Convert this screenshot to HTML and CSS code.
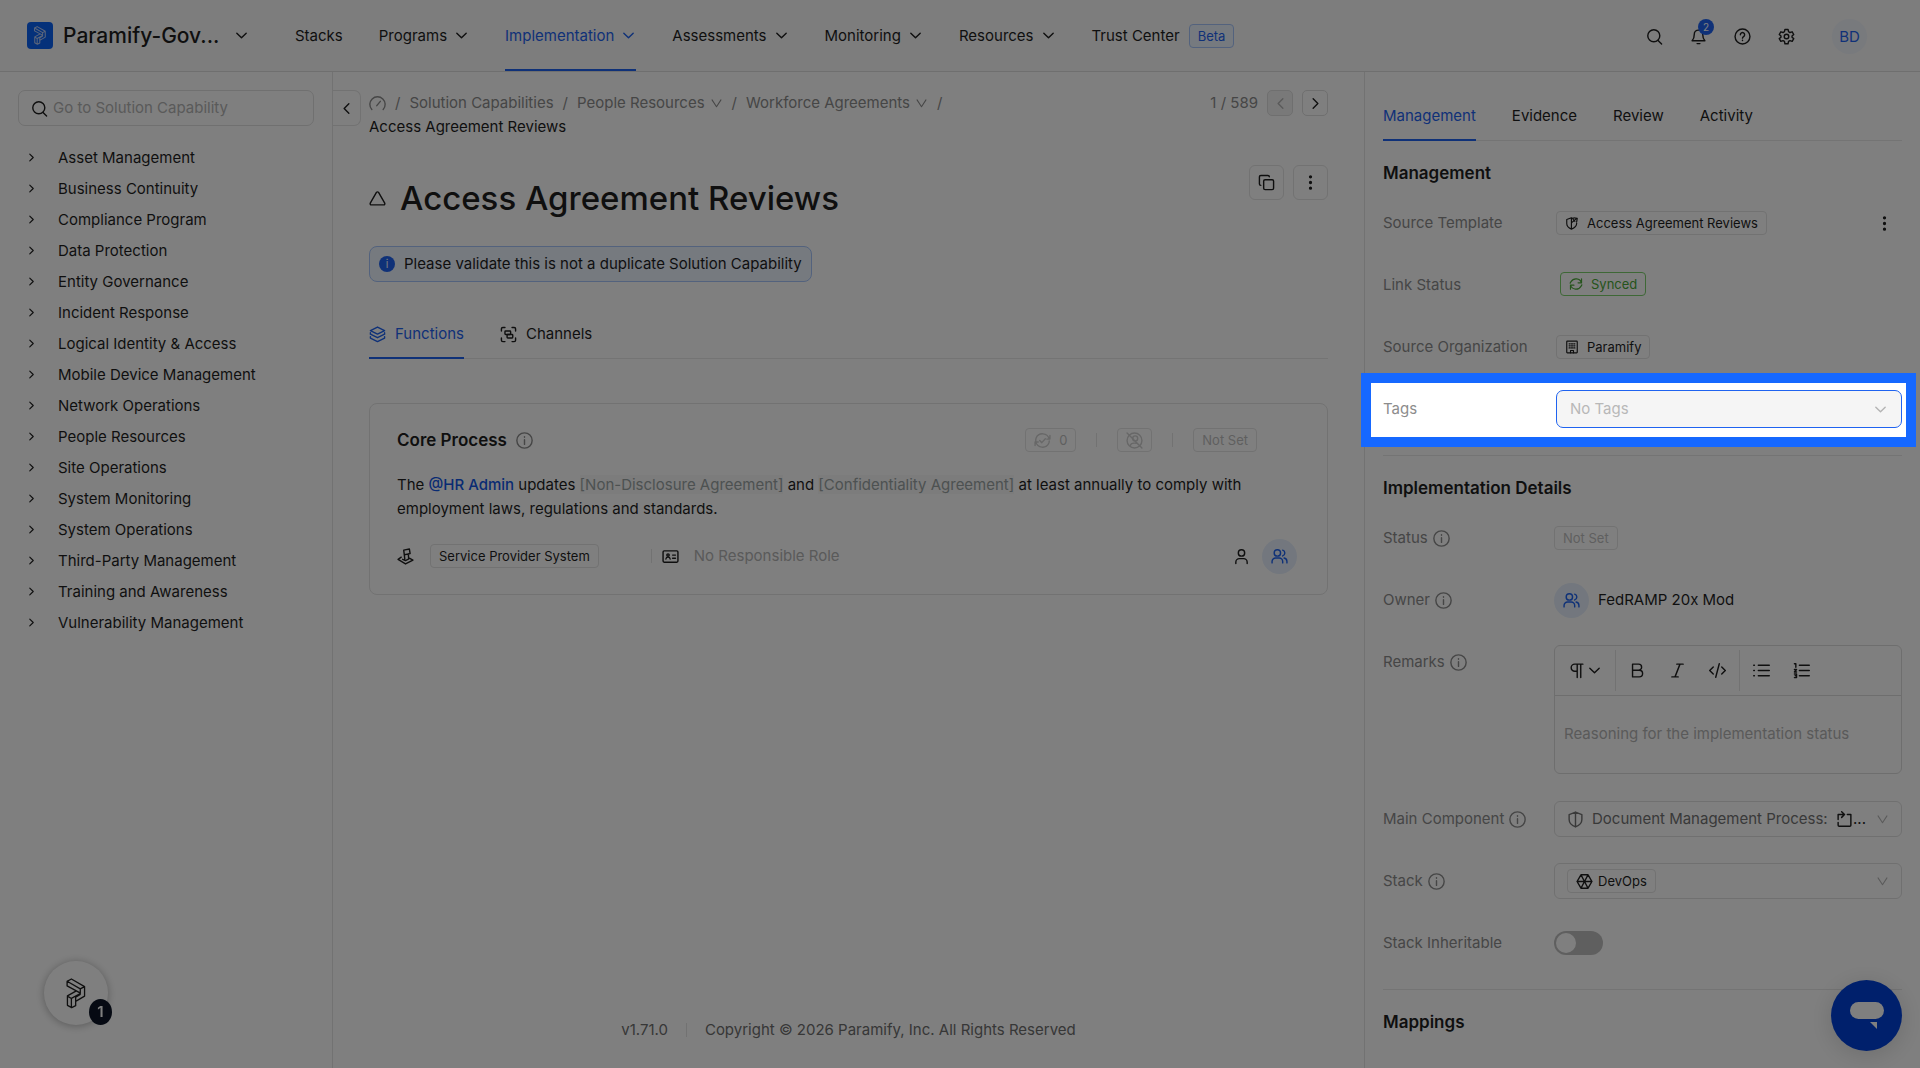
FILE: index.html
```html
<!DOCTYPE html>
<html lang="en">
<head>
  <meta charset="UTF-8">
  <meta name="viewport" content="width=device-width, initial-scale=1.0">
  <title>Access Agreement Reviews</title>
  <link rel="stylesheet" href="styles.css">
</head>
<body>
  <!-- Icon sprite -->
  <svg class="sprite" aria-hidden="true">
    <symbol id="i-mark" viewBox="0 0 60 94"><path d="M3 10 16 3 56 26V55L29 71V84L17 90 4 83V54L31 39 3 24ZM3 10 43 33 56 26M43 33V47L16 62 4 55M16 62V90M29 71V58L43 50M31 39 42 45"/></symbol>
    <symbol id="i-down" viewBox="0 0 16 16"><path d="m3 5.500 5 5 5-5"/></symbol>
    <symbol id="i-right" viewBox="0 0 16 16"><path d="m5.500 3 5 5-5 5"/></symbol>
    <symbol id="i-left" viewBox="0 0 16 16"><path d="m10.500 3-5 5 5 5"/></symbol>
    <symbol id="i-vee" viewBox="0 0 16 16"><path d="M2.500 3.500 8 12l5.500-8.500"/></symbol>
    <symbol id="i-search" viewBox="0 0 24 24"><circle cx="11" cy="11" r="8.500"/><path d="m17 17.500 5 5"/></symbol>
    <symbol id="i-bell" viewBox="0 0 24 24"><path d="M6 9a6 6 0 0 1 12 0c0 6 3 9 3 9H3s3-3 3-9M10 22h4"/></symbol>
    <symbol id="i-help" viewBox="0 0 24 24"><circle cx="12" cy="12" r="10.500"/><path d="M9 9.500a3 3 0 1 1 4.500 2.600c-1 .6-1.500 1-1.500 2.200M12 17.200v.6"/></symbol>
    <symbol id="i-gear" viewBox="0 0 24 24"><path d="m9.800 2-.7 3.200-2 1.200-3.100-1L1.800 9.200 4.200 11.400v1.600L1.800 15l2.200 3.800 3.100-1 2 1.200.7 3.200h4.400l.7-3.200 2-1.200 3.100 1 2.200-3.800-2.400-2v-1.600l2.400-2.200L20 5.400l-3.100 1-2-1.200L14.200 2Z"/><circle cx="12" cy="12" r="3.200"/></symbol>
    <symbol id="i-dash" viewBox="0 0 24 24"><path d="M4 20.500A10.800 10.800 0 1 1 20 20.500M11 15l5-6"/></symbol>
    <symbol id="i-triangle" viewBox="0 0 24 24"><path d="M10.500 3.500 1.800 18.500a1.700 1.700 0 0 0 1.500 2.500h17.400a1.700 1.700 0 0 0 1.500-2.500L13.500 3.500a1.700 1.700 0 0 0-3 0Z"/></symbol>
    <symbol id="i-copy" viewBox="0 0 24 24"><rect x="8" y="8" width="14" height="14" rx="2"/><path d="M4 16a2 2 0 0 1-2-2V4a2 2 0 0 1 2-2h10a2 2 0 0 1 2 2"/></symbol>
    <symbol id="i-kebab" viewBox="0 0 24 24"><circle cx="12" cy="4" r="1.300" fill="currentColor"/><circle cx="12" cy="12" r="1.300" fill="currentColor"/><circle cx="12" cy="20" r="1.300" fill="currentColor"/></symbol>
    <symbol id="i-info" viewBox="0 0 24 24"><circle cx="12" cy="12" r="10.800"/><path d="M12 11v6.500M12 6.500v1"/></symbol>
    <symbol id="i-layers" viewBox="0 0 24 24"><path d="m12 1.500 10 5-10 5-10-5ZM2 9.500v2l10 5 10-5v-2M2 15v2l10 5 10-5v-2"/></symbol>
    <symbol id="i-channels" viewBox="0 0 24 24"><path d="M2 7V4a2 2 0 0 1 2-2h3M17 2h3a2 2 0 0 1 2 2v3M22 17v3a2 2 0 0 1-2 2h-3M7 22H4a2 2 0 0 1-2-2v-3"/><rect x="7" y="7" width="8" height="5" rx="1"/><rect x="10" y="12" width="8" height="5" rx="1"/></symbol>
    <symbol id="i-synccheck" viewBox="0 0 24 24"><path d="M21.500 10A9.800 9.800 0 0 0 3 8.500 9.800 9.800 0 0 0 2.500 13M22.500 5v5h-4.500M2.500 14A9.800 9.800 0 0 0 21 15.500a9.800 9.800 0 0 0 .5-3M1.500 19v-5H6M8 12l3 3 5-5.500"/></symbol>
    <symbol id="i-nouser" viewBox="0 0 24 24"><circle cx="12" cy="12" r="10.500"/><circle cx="13" cy="9" r="3.500"/><path d="M6 19c1-4 9-4.500 12-1M1.500 1.500l21 21"/></symbol>
    <symbol id="i-stamp" viewBox="0 0 24 24"><path d="M11 15.500 9.500 3l8-1.500 1 6.500-8 1.500M16 8.500l.5 7M6 13 1.500 16 12 22.500 22.500 17 18 14.500M8 16l4 1.800 4-2"/></symbol>
    <symbol id="i-idcard" viewBox="0 0 24 24"><rect x="1.500" y="4" width="21" height="16" rx="1.500"/><circle cx="8.500" cy="10" r="1.700"/><path d="M5.500 15.500c.5-3.500 5.500-3.500 6 0M15 10h4M15 14.500h4"/></symbol>
    <symbol id="i-user" viewBox="0 0 24 24"><circle cx="12" cy="7" r="4.500"/><path d="M4 22v-2a5 5 0 0 1 5-5h6a5 5 0 0 1 5 5v2"/></symbol>
    <symbol id="i-users" viewBox="0 0 24 24"><circle cx="9" cy="7" r="4.500"/><path d="M1.500 21v-2a5 5 0 0 1 5-5h5a5 5 0 0 1 5 5v2M16.500 3a4.300 4.300 0 0 1 0 8.200M22.500 21v-2a5 5 0 0 0-4-4.800"/></symbol>
    <symbol id="i-shieldup" viewBox="0 0 24 24"><path d="M14 4.500 11 3 3 6v7c0 5 4 8 8 9.500 4-1.500 9-4.500 9-9.500v-1M11 3v19.500M12 11l7-6M15 3l6 1-1 6M14 6l3 3"/></symbol>
    <symbol id="i-sync" viewBox="0 0 24 24"><path d="M21.500 10A10 10 0 0 0 3.500 8L2 10.500M21.500 3v7h-6M2.500 14a10 10 0 0 0 18 2l1.500-2.500M2.500 21v-7h6"/></symbol>
    <symbol id="i-building" viewBox="0 0 24 24"><rect x="3" y="2" width="18" height="20" rx="1"/><path d="M9.500 22v-4h5v4M7 6.500h2M11 6.500h2M15 6.500h2M7 10h2M11 10h2M15 10h2M7 13.500h2M11 13.500h2M15 13.500h2"/></symbol>
    <symbol id="i-para" viewBox="0 0 24 24"><path d="M21 3H9.500a5 5 0 0 0 0 10H13M13 3v19M18 3v19"/></symbol>
    <symbol id="i-bold" viewBox="0 0 24 24"><path d="M5 3h8.500a4.300 4.300 0 0 1 0 8.600H5ZM5 11.600h9.500a4.600 4.600 0 0 1 0 9.400H5Z"/></symbol>
    <symbol id="i-italic" viewBox="0 0 24 24"><path d="M20 3h-9M13 21H4M15.500 3l-7 18"/></symbol>
    <symbol id="i-code" viewBox="0 0 24 24"><path d="m6 7-5 5 5 5M18 7l5 5-5 5M14.500 2.500l-5 19"/></symbol>
    <symbol id="i-ul" viewBox="0 0 24 24"><path d="M7.500 4.500H23M7.500 12H23M7.500 19.500H23M1 4.500h1M1 12h1M1 19.500h1"/></symbol>
    <symbol id="i-ol" viewBox="0 0 24 24"><path d="M9 4.500h14M9 12h14M9 19.500h14M2 2.500h2v5M2 10.500h3l-3 3.500h3M2 17h3v5H2M3 19.500h2"/></symbol>
    <symbol id="i-shield" viewBox="0 0 24 24"><path d="M12 1.500 3 5v7c0 5.500 4 8.500 9 10.500 5-2 9-5 9-10.500V5ZM12 1.500v21"/></symbol>
    <symbol id="i-reuse" viewBox="0 0 24 24"><path d="M10 5H3v7M3 16v4a1.500 1.500 0 0 0 1.500 1.500h15A1.500 1.500 0 0 0 21 20V5h-5M8 1l4 4-4 4"/></symbol>
    <symbol id="i-hex" viewBox="0 0 24 24"><path d="M7 2.500h10L22.500 12 17 21.500H7L1.500 12ZM7 2.500l10 19M17 2.500l-10 19M1.500 12h21"/></symbol>
  </svg>

  <header class="topbar">
    <button class="org" type="button">
      <span class="org-logo"><svg><use href="#i-mark"/></svg></span>
      <span class="org-name">Paramify-Gov...</span>
      <svg class="icon sm"><use href="#i-down"/></svg>
    </button>
    <nav class="main-nav">
      <a href="#">Stacks</a>
      <a href="#">Programs <svg class="icon sm"><use href="#i-down"/></svg></a>
      <a href="#" class="active">Implementation <svg class="icon sm"><use href="#i-down"/></svg></a>
      <a href="#">Assessments <svg class="icon sm"><use href="#i-down"/></svg></a>
      <a href="#">Monitoring <svg class="icon sm"><use href="#i-down"/></svg></a>
      <a href="#">Resources <svg class="icon sm"><use href="#i-down"/></svg></a>
      <a href="#">Trust Center <span class="tag beta">Beta</span></a>
    </nav>
    <div class="tools">
      <button type="button" aria-label="Search"><svg class="icon"><use href="#i-search"/></svg></button>
      <button type="button" aria-label="Notifications"><svg class="icon"><use href="#i-bell"/></svg><span class="count">2</span></button>
      <button type="button" aria-label="Help"><svg class="icon"><use href="#i-help"/></svg></button>
      <button type="button" aria-label="Settings"><svg class="icon"><use href="#i-gear"/></svg></button>
      <button type="button" class="avatar">BD</button>
    </div>
  </header>

  <div class="layout">
    <aside class="sidebar">
      <label class="search">
        <svg class="icon"><use href="#i-search"/></svg>
        <input type="text" placeholder="Go to Solution Capability" aria-label="Go to Solution Capability">
      </label>
      <ul class="tree">
        <li><svg class="icon xs"><use href="#i-right"/></svg><a href="#">Asset Management</a></li>
        <li><svg class="icon xs"><use href="#i-right"/></svg><a href="#">Business Continuity</a></li>
        <li><svg class="icon xs"><use href="#i-right"/></svg><a href="#">Compliance Program</a></li>
        <li><svg class="icon xs"><use href="#i-right"/></svg><a href="#">Data Protection</a></li>
        <li><svg class="icon xs"><use href="#i-right"/></svg><a href="#">Entity Governance</a></li>
        <li><svg class="icon xs"><use href="#i-right"/></svg><a href="#">Incident Response</a></li>
        <li><svg class="icon xs"><use href="#i-right"/></svg><a href="#">Logical Identity &amp; Access</a></li>
        <li><svg class="icon xs"><use href="#i-right"/></svg><a href="#">Mobile Device Management</a></li>
        <li><svg class="icon xs"><use href="#i-right"/></svg><a href="#">Network Operations</a></li>
        <li><svg class="icon xs"><use href="#i-right"/></svg><a href="#">People Resources</a></li>
        <li><svg class="icon xs"><use href="#i-right"/></svg><a href="#">Site Operations</a></li>
        <li><svg class="icon xs"><use href="#i-right"/></svg><a href="#">System Monitoring</a></li>
        <li><svg class="icon xs"><use href="#i-right"/></svg><a href="#">System Operations</a></li>
        <li><svg class="icon xs"><use href="#i-right"/></svg><a href="#">Third-Party Management</a></li>
        <li><svg class="icon xs"><use href="#i-right"/></svg><a href="#">Training and Awareness</a></li>
        <li><svg class="icon xs"><use href="#i-right"/></svg><a href="#">Vulnerability Management</a></li>
      </ul>
    </aside>

    <main class="content">
      <button class="collapse" type="button" aria-label="Collapse sidebar"><svg class="icon sm"><use href="#i-left"/></svg></button>

      <div class="crumb-row">
        <nav class="breadcrumb">
          <a href="#" aria-label="Dashboard"><svg class="icon"><use href="#i-dash"/></svg></a><i>/</i>
          <a href="#">Solution Capabilities</a><i>/</i>
          <a href="#">People Resources <svg class="icon vee"><use href="#i-vee"/></svg></a><i>/</i>
          <a href="#">Workforce Agreements <svg class="icon vee"><use href="#i-vee"/></svg></a><i>/</i>
          <span class="current">Access Agreement Reviews</span>
        </nav>
        <div class="pager">
          <span>1 / 589</span>
          <button type="button" aria-label="Previous" disabled><svg class="icon sm"><use href="#i-left"/></svg></button>
          <button type="button" aria-label="Next"><svg class="icon sm"><use href="#i-right"/></svg></button>
        </div>
      </div>

      <div class="title-row">
        <h1><svg class="icon"><use href="#i-triangle"/></svg>Access Agreement Reviews</h1>
        <div class="title-actions">
          <button type="button" aria-label="Copy"><svg class="icon"><use href="#i-copy"/></svg></button>
          <button type="button" aria-label="More"><svg class="icon"><use href="#i-kebab"/></svg></button>
        </div>
      </div>

      <div class="alert"><span class="alert-dot">i</span>Please validate this is not a duplicate Solution Capability</div>

      <div class="tabs content-tabs">
        <button type="button" class="active"><svg class="icon"><use href="#i-layers"/></svg>Functions</button>
        <button type="button"><svg class="icon"><use href="#i-channels"/></svg>Channels</button>
      </div>

      <section class="card">
        <div class="card-head">
          <h2>Core Process</h2>
          <svg class="icon muted"><use href="#i-info"/></svg>
          <div class="card-tags">
            <span class="tag faint"><svg class="icon"><use href="#i-synccheck"/></svg>0</span>
            <span class="sep"></span>
            <span class="tag faint"><svg class="icon"><use href="#i-nouser"/></svg></span>
            <span class="sep"></span>
            <span class="tag faint">Not Set</span>
          </div>
        </div>
        <p>The <a href="#">@HR Admin</a> updates <mark>[Non-Disclosure Agreement]</mark> and <mark>[Confidentiality Agreement]</mark> at least annually to comply with<br>employment laws, regulations and standards.</p>
        <div class="card-foot">
          <svg class="icon"><use href="#i-stamp"/></svg>
          <span class="tag provider">Service Provider System</span>
          <span class="sep"></span>
          <svg class="icon"><use href="#i-idcard"/></svg>
          <span class="no-role">No Responsible Role</span>
          <span class="people">
            <svg class="icon"><use href="#i-user"/></svg>
            <span class="team"><svg class="icon"><use href="#i-users"/></svg></span>
          </span>
        </div>
      </section>

      <footer class="footer"><span>v1.71.0</span><span class="sep"></span><span>Copyright © 2026 Paramify, Inc. All Rights Reserved</span></footer>
    </main>

    <aside class="panel">
      <div class="tabs panel-tabs">
        <button type="button" class="active">Management</button>
        <button type="button">Evidence</button>
        <button type="button">Review</button>
        <button type="button">Activity</button>
      </div>

      <section class="panel-section management">
        <h3>Management</h3>
        <div class="row">
          <span class="label">Source Template</span>
          <span class="tag"><svg class="icon"><use href="#i-shieldup"/></svg>Access Agreement Reviews</span>
          <button type="button" class="row-more" aria-label="More"><svg class="icon"><use href="#i-kebab"/></svg></button>
        </div>
        <div class="row">
          <span class="label">Link Status</span>
          <div class="status-cell"><span class="tag synced"><svg class="icon"><use href="#i-sync"/></svg>Synced</span></div>
        </div>
        <div class="row">
          <span class="label">Source Organization</span>
          <span class="tag"><svg class="icon"><use href="#i-building"/></svg>Paramify</span>
        </div>
        <div class="row spotlight">
          <label class="label" for="tags">Tags</label>
          <div class="picker tags-picker">
            <select id="tags" disabled><option>No Tags</option></select>
            <svg class="icon sm"><use href="#i-down"/></svg>
          </div>
        </div>
      </section>

      <section class="panel-section">
        <h3>Implementation Details</h3>
        <div class="row">
          <span class="label">Status <svg class="icon"><use href="#i-info"/></svg></span>
          <span class="tag faint">Not Set</span>
        </div>
        <div class="row">
          <span class="label">Owner <svg class="icon"><use href="#i-info"/></svg></span>
          <span class="team"><svg class="icon"><use href="#i-users"/></svg></span>
          <span class="owner-name">FedRAMP 20x Mod</span>
        </div>
        <div class="row remarks">
          <label class="label" for="remarks">Remarks <svg class="icon"><use href="#i-info"/></svg></label>
          <div class="editor">
            <div class="toolbar">
              <div class="group">
                <button type="button" aria-label="Block type"><svg class="icon"><use href="#i-para"/></svg><svg class="icon sm"><use href="#i-down"/></svg></button>
              </div>
              <div class="group">
                <button type="button" aria-label="Bold"><svg class="icon"><use href="#i-bold"/></svg></button>
                <button type="button" aria-label="Italic"><svg class="icon"><use href="#i-italic"/></svg></button>
                <button type="button" aria-label="Code"><svg class="icon"><use href="#i-code"/></svg></button>
              </div>
              <div class="group">
                <button type="button" aria-label="Bulleted list"><svg class="icon"><use href="#i-ul"/></svg></button>
                <button type="button" aria-label="Numbered list"><svg class="icon"><use href="#i-ol"/></svg></button>
              </div>
            </div>
            <textarea id="remarks" placeholder="Reasoning for the implementation status"></textarea>
          </div>
        </div>
        <div class="row">
          <label class="label" for="component">Main Component <svg class="icon"><use href="#i-info"/></svg></label>
          <div class="picker component">
            <svg class="icon"><use href="#i-shield"/></svg>
            <select id="component"><option>Document Management Process:</option></select>
            <span class="reuse"><svg class="icon"><use href="#i-reuse"/></svg>...</span>
            <svg class="icon vee"><use href="#i-vee"/></svg>
          </div>
        </div>
        <div class="row">
          <label class="label" for="stack">Stack <svg class="icon"><use href="#i-info"/></svg></label>
          <div class="picker">
            <span class="tag stack-tag"><svg class="icon"><use href="#i-hex"/></svg><select id="stack"><option>DevOps</option></select></span>
            <svg class="icon vee"><use href="#i-vee"/></svg>
          </div>
        </div>
        <div class="row">
          <label class="label" for="inheritable">Stack Inheritable</label>
          <input type="checkbox" class="switch" id="inheritable">
        </div>
      </section>

      <section class="panel-section">
        <h3>Mappings</h3>
      </section>
    </aside>
  </div>

  <button class="guide" type="button" aria-label="Guide"><svg><use href="#i-mark"/></svg><span>1</span></button>
  <button class="chat" type="button" aria-label="Chat">
    <svg viewBox="0 0 34 30"><rect x="0" y="1" width="34" height="17" rx="8.500"/><path d="M20 21h7v7Z"/></svg>
  </button>
</body>
</html>
```
FILE: styles.css
```css
* {
  box-sizing: border-box;
}
body {
  margin: 0;
  height: 100vh;
  display: flex;
  flex-direction: column;
  overflow: hidden;
  font-family: Inter, "Liberation Sans", sans-serif;
  font-size: 15px;
  line-height: 24px;
  color: #1f1f1f;
  background: #fff;
}
a {
  color: inherit;
  text-decoration: none;
}
button,
input,
select,
textarea {
  font: inherit;
  color: inherit;
  background: none;
  border: 0;
  padding: 0;
  margin: 0;
}
button {
  cursor: pointer;
}
h1,
h2,
h3,
p,
ul {
  margin: 0;
  padding: 0;
}
.sprite {
  display: none;
}
svg {
  fill: none;
  stroke: currentColor;
  stroke-linecap: round;
  stroke-linejoin: round;
}
.icon {
  width: 17px;
  height: 17px;
  stroke-width: 2;
  flex: none;
}
.icon.sm {
  width: 15px;
  height: 15px;
  stroke-width: 1.5;
}
.icon.xs {
  width: 11px;
  height: 11px;
  stroke-width: 1.7;
}
.icon.vee {
  width: 13px;
  height: 13px;
  stroke-width: 1.3;
}
.muted {
  color: #8c8c8c;
}

/* Shared tag */
.tag {
  display: inline-flex;
  align-items: center;
  gap: 8px;
  height: 24px;
  padding: 0 8px;
  border: 1px solid #e4e4e4;
  border-radius: 4px;
  font-size: 13px;
  white-space: nowrap;
}
.tag .icon {
  width: 14px;
  height: 14px;
}
.faint {
  color: #bfbfbf;
}
.sep {
  width: 1px;
  height: 14px;
  background: #e4e4e4;
}
.team {
  display: flex;
  align-items: center;
  justify-content: center;
  width: 35px;
  height: 35px;
  border-radius: 50%;
  background: #e6effc;
  color: #1f63f0;
}

/* Top bar */
.topbar {
  display: flex;
  align-items: center;
  height: 72px;
  flex: none;
  padding: 0 53px 0 27px;
  background: #fafafa;
  border-bottom: 1px solid #dedede;
}
.org {
  display: flex;
  align-items: center;
  width: 222px;
}
.org-logo {
  display: flex;
  align-items: center;
  justify-content: center;
  width: 26px;
  height: 27px;
  margin-right: 10px;
  border-radius: 4px;
  background: #0b62f5;
  color: #b9cdf5;
}
.org-logo svg {
  width: 14px;
  height: 19px;
  stroke-width: 5;
}
.org-name {
  flex: 1;
  text-align: left;
  font-size: 21px;
  font-weight: 500;
}
.main-nav {
  display: flex;
  align-self: stretch;
  gap: 36px;
  margin-left: 46px;
}
.main-nav a {
  display: flex;
  align-items: center;
  gap: 7px;
  border-bottom: 2px solid transparent;
  border-top: 2px solid transparent;
}
.main-nav .active {
  color: #1f63f0;
  border-bottom-color: #1f63f0;
}
.beta {
  margin-left: 2px;
  color: #1f63f0;
  border-color: #a6c5fb;
  background: #edf4ff;
}
.tools {
  display: flex;
  align-items: center;
  gap: 27px;
  margin-left: auto;
  padding-top: 2px;
}
.tools button {
  position: relative;
  display: flex;
}
.count {
  position: absolute;
  top: -9px;
  left: 8px;
  width: 16px;
  height: 16px;
  border-radius: 8px;
  background: #1f63f0;
  color: #fff;
  font-size: 10px;
  line-height: 16px;
}
.tools .avatar {
  align-items: center;
  justify-content: center;
  width: 35px;
  height: 35px;
  margin-left: 10px;
  border-radius: 50%;
  background: #f0f4fa;
  color: #1f63f0;
}

/* Columns */
.layout {
  flex: 1;
  min-height: 0;
  display: grid;
  grid-template-columns: 333px 1fr 556px;
}
.sidebar {
  padding: 18px;
  border-right: 1px solid #e4e4e4;
}
.search {
  display: flex;
  align-items: center;
  gap: 5px;
  height: 36px;
  padding: 0 12px;
  border: 1px solid #e0e0e0;
  border-radius: 7px;
}
.search input {
  flex: 1;
  min-width: 0;
  outline: none;
}
::placeholder {
  color: #b4b4b4;
  opacity: 1;
}
.tree {
  list-style: none;
  margin-top: 16px;
}
.tree li {
  display: flex;
  align-items: center;
  gap: 21px;
  height: 31px;
  padding-left: 8px;
}

/* Main column */
.content {
  position: relative;
  display: flex;
  flex-direction: column;
  padding: 18px 36px 26px;
}
.collapse {
  position: absolute;
  top: 18px;
  left: 0;
  display: flex;
  align-items: center;
  justify-content: center;
  width: 28px;
  height: 36px;
  border: 1px solid #e4e4e4;
  border-left: 0;
  border-radius: 0 7px 7px 0;
}
.crumb-row {
  display: flex;
  justify-content: space-between;
  align-items: flex-start;
}
.breadcrumb {
  display: flex;
  flex-wrap: wrap;
  align-items: center;
  width: 65%;
  padding-top: 1px;
  color: #8c8c8c;
}
.breadcrumb a {
  display: flex;
  align-items: center;
  gap: 5px;
}
.breadcrumb i {
  font-style: normal;
  margin: 0 9px;
}
.current {
  color: #1f1f1f;
}
.pager {
  display: flex;
  align-items: center;
  gap: 9px;
  color: #8c8c8c;
}
.pager button {
  display: flex;
  align-items: center;
  justify-content: center;
  width: 26px;
  height: 26px;
  border: 1px solid #dedede;
  border-radius: 5px;
  color: #1f1f1f;
}
.pager button:disabled {
  background: #f2f2f2;
  color: #b4b4b4;
}
.title-row {
  display: flex;
  justify-content: space-between;
  margin-top: 26px;
}
h1 {
  display: flex;
  align-items: center;
  gap: 14px;
  padding-top: 11px;
  font-size: 33px;
  font-weight: 500;
  line-height: 44px;
}
.title-actions {
  display: flex;
  gap: 9px;
}
.title-actions button {
  display: flex;
  align-items: center;
  justify-content: center;
  width: 35px;
  height: 35px;
  border: 1px solid #e4e4e4;
  border-radius: 6px;
}
.alert {
  display: flex;
  align-items: center;
  gap: 9px;
  align-self: flex-start;
  height: 36px;
  margin-top: 26px;
  padding: 0 9px;
  border: 1px solid #a6c5fb;
  border-radius: 8px;
  background: #edf4ff;
}
.alert-dot {
  width: 16px;
  height: 16px;
  border-radius: 50%;
  background: #1f63f0;
  color: #edf4ff;
  font-size: 11px;
  line-height: 16px;
  text-align: center;
}
.tabs {
  display: flex;
  gap: 36px;
  border-bottom: 1px solid #e8e8e8;
}
.tabs button {
  display: flex;
  align-items: center;
  gap: 9px;
  height: 50px;
  margin-bottom: -1px;
  border-top: 2px solid transparent;
  border-bottom: 2px solid transparent;
}
.tabs .active {
  color: #1f63f0;
  border-bottom-color: #1f63f0;
}
.content-tabs {
  margin-top: 27px;
}
.card {
  margin-top: 44px;
  padding: 21px 30px 20px 27px;
  border: 1px solid #e4e4e4;
  border-radius: 8px;
}
.card-head {
  display: flex;
  align-items: center;
  gap: 9px;
  height: 30px;
}
h2,
h3 {
  font-size: 17px;
  font-weight: 600;
}
.card-tags {
  display: flex;
  align-items: center;
  gap: 20px;
  margin: 0 40px 0 auto;
}
.card-tags .icon {
  width: 17px;
  height: 17px;
  color: #cfcfcf;
}
.card p {
  margin-top: 18px;
}
.card p a {
  color: #1257e6;
  font-weight: 500;
}
mark {
  background: #f8f8f8;
  color: #9aa3a3;
}
.card-foot {
  display: flex;
  align-items: center;
  height: 36px;
  margin-top: 17px;
}
.provider {
  margin-left: 16px;
}
.card-foot .sep {
  margin: 0 10px 0 52px;
}
.no-role {
  margin-left: 15px;
  color: #b4b4b4;
}
.people {
  display: flex;
  align-items: center;
  gap: 12px;
  margin-left: auto;
}
.footer {
  display: flex;
  align-items: center;
  justify-content: center;
  gap: 18px;
  margin-top: auto;
  color: #6e6e6e;
}

/* Right panel */
.panel {
  padding: 19px 18px 0;
  border-left: 1px solid #e4e4e4;
  min-width: 0;
}
.panel-section {
  padding: 20px 0 15px;
  border-top: 1px solid #e8e8e8;
}
.panel-section.management {
  border-top: 0;
}
h3 {
  margin-bottom: 7px;
}
.row {
  display: flex;
  align-items: center;
  height: 62px;
}
.label {
  display: flex;
  align-items: center;
  gap: 5px;
  flex: none;
  width: 171px;
  color: #8c8c8c;
}
.management .label {
  width: 173px;
}
.row-more {
  display: flex;
  margin: 0 9px 0 auto;
}
.status-cell {
  padding: 0 4px;
}
.synced {
  color: #4ba838;
  border-color: #7cd06c;
}
.owner-name {
  margin-left: 9px;
}
.picker {
  flex: 1;
  min-width: 0;
  display: flex;
  align-items: center;
  height: 36px;
  padding: 0 12px;
  border: 1px solid #e0e0e0;
  border-radius: 6px;
}
.picker > .icon:last-child {
  margin-left: auto;
  color: #b4b4b4;
}
.picker select {
  appearance: none;
  opacity: 1;
  outline: none;
}
.tags-picker {
  height: 38px;
  padding: 0 13px;
  border-color: #1f63f0;
  border-radius: 7px;
  background: #f5f5f5;
}
.tags-picker select {
  flex: 1;
  color: #b8b8b8;
}
.component {
  gap: 8px;
  color: #737373;
}
.component select {
  flex: 0 1 auto;
  min-width: 0;
}
.reuse {
  display: flex;
  align-items: center;
  color: #1f1f1f;
}
.stack-tag {
  gap: 5px;
}
.stack-tag .icon {
  width: 17px;
  height: 17px;
}
.remarks {
  align-items: flex-start;
  height: auto;
  padding: 14px 0;
}
.remarks .label {
  padding-top: 5px;
}
.editor {
  flex: 1;
  min-width: 0;
  display: flex;
  flex-direction: column;
  border: 1px solid #dcdcdc;
  border-radius: 6px;
}
.toolbar {
  display: flex;
  height: 50px;
  padding: 4px 0;
  border-bottom: 1px solid #dcdcdc;
}
.group {
  display: flex;
  align-items: center;
  gap: 23px;
  padding: 0 13px;
}
.group + .group {
  border-left: 1px solid #e4e4e4;
}
.group button {
  display: flex;
  align-items: center;
  gap: 2px;
}
.editor textarea {
  display: block;
  height: 77px;
  padding: 26px 9px;
  resize: none;
  outline: none;
  overflow: hidden;
}
.switch {
  appearance: none;
  width: 49px;
  height: 24px;
  padding: 2px;
  border-radius: 12px;
  background: #bfbfbf;
}
.switch::before {
  content: "";
  display: block;
  width: 20px;
  height: 20px;
  border-radius: 50%;
  background: #fff;
}
.switch:checked::before {
  margin-left: auto;
}

/* Floating buttons */
.guide,
.chat {
  position: fixed;
  display: flex;
  align-items: center;
  justify-content: center;
  border-radius: 50%;
}
.guide {
  left: 44px;
  bottom: 43px;
  width: 64px;
  height: 64px;
  background: #fff;
  box-shadow: 0 1px 8px rgba(0, 0, 0, 0.3);
}
.guide svg {
  width: 20px;
  height: 31px;
  stroke-width: 4;
}
.guide span {
  position: absolute;
  right: -4px;
  bottom: 0;
  width: 23px;
  height: 26px;
  border-radius: 50%;
  background: #0c1526;
  color: #fff;
  font-weight: 600;
  line-height: 26px;
}
.chat {
  right: 18px;
  bottom: 17px;
  width: 71px;
  height: 71px;
  background: #0041d9;
  box-shadow: 0 4px 24px rgba(0, 0, 0, 0.15);
}
.chat svg {
  width: 34px;
  height: 30px;
  fill: #fff;
  stroke: none;
}

/* Tour step: dims everything except this row */
.spotlight {
  position: relative;
  z-index: 10;
}
.spotlight::after {
  content: "";
  position: absolute;
  inset: -5px -14px -7px -22px;
  border: 10px solid #1668ff;
  box-shadow: 0 0 0 100vmax rgba(0, 0, 0, 0.5);
  pointer-events: none;
}
```
